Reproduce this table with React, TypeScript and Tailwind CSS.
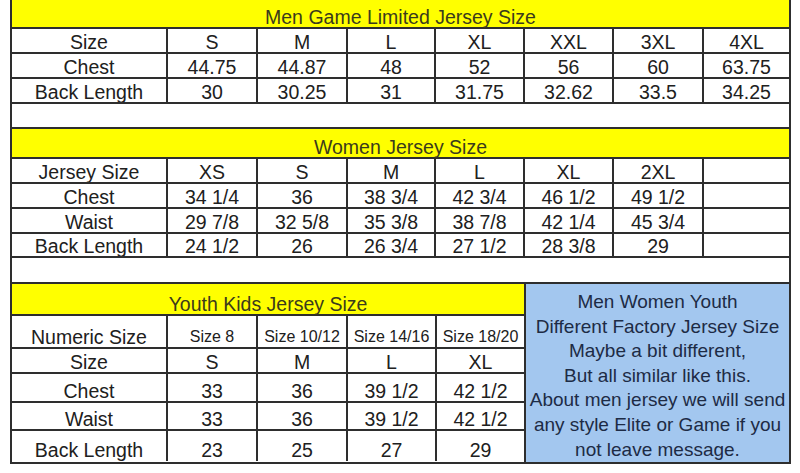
import React from "react";

const B = "border-[#2e2e2e]";
const MEN_COLS = "grid-cols-[154px_90px_90px_88px_89px_89px_90px_87px]";
const YOUTH_COLS = "grid-cols-[154px_90px_90px_89px_89px]";

function Row({
  cells,
  cols,
  h,
  small,
}: {
  cells: string[];
  cols: string;
  h: string;
  small?: boolean[];
}) {
  return (
    <div className={`grid ${cols} ${h} border-b-2 ${B}`}>
      {cells.map((c, i) => (
        <div
          key={i}
          className={`flex items-end justify-center overflow-hidden whitespace-nowrap bg-white ${
            i > 0 ? `border-l-2 ${B}` : ""
          } ${small && small[i] ? "text-[16px] leading-[18px] pb-[1px]" : "text-[19.5px] leading-[20px]"}`}
        >
          {c}
        </div>
      ))}
    </div>
  );
}

function Header({ text, h }: { text: string; h: string }) {
  return (
    <div
      className={`flex items-end justify-center bg-[#ffff00] ${h} border-b-2 ${B} text-[19.5px] leading-[20px] text-[#3b3b1c]`}
    >
      {text}
    </div>
  );
}

export default function App() {
  return (
    <div
      className="min-h-[473px] w-[800px] bg-white text-[#202020]"
      style={{ fontFamily: '"Liberation Sans", Arial, sans-serif' }}
    >
      <div className={`ml-[10px] flex w-[781px] flex-col border-x-2 ${B}`}>
        {/* Men */}
        <Header text="Men Game Limited Jersey Size" h="h-[29px]" />
        <Row cols={MEN_COLS} h="h-[25px]" cells={["Size", "S", "M", "L", "XL", "XXL", "3XL", "4XL"]} />
        <Row
          cols={MEN_COLS}
          h="h-[25px]"
          cells={["Chest", "44.75", "44.87", "48", "52", "56", "60", "63.75"]}
        />
        <Row
          cols={MEN_COLS}
          h="h-[25px]"
          cells={["Back Length", "30", "30.25", "31", "31.75", "32.62", "33.5", "34.25"]}
        />
        <div className={`h-[25px] border-b-2 ${B} bg-white`} />

        {/* Women */}
        <Header text="Women Jersey Size" h="h-[30px]" />
        <Row
          cols={MEN_COLS}
          h="h-[25px]"
          cells={["Jersey Size", "XS", "S", "M", "L", "XL", "2XL", ""]}
        />
        <Row
          cols={MEN_COLS}
          h="h-[25px]"
          cells={["Chest", "34 1/4", "36", "38 3/4", "42 3/4", "46 1/2", "49 1/2", ""]}
        />
        <Row
          cols={MEN_COLS}
          h="h-[25px]"
          cells={["Waist", "29 7/8", "32 5/8", "35 3/8", "38 7/8", "42 1/4", "45 3/4", ""]}
        />
        <Row
          cols={MEN_COLS}
          h="h-[24px]"
          cells={["Back Length", "24 1/2", "26", "26 3/4", "27 1/2", "28 3/8", "29", ""]}
        />
        <div className={`h-[26px] border-b-2 ${B} bg-white`} />

        {/* Youth + note */}
        <div className={`flex border-b-2 ${B}`}>
          <div className="flex w-[512px] flex-col">
            <Header text="Youth Kids Jersey Size" h="h-[32px]" />
            <Row
              cols={YOUTH_COLS}
              h="h-[33px]"
              cells={["Numeric Size", "Size 8", "Size 10/12", "Size 14/16", "Size 18/20"]}
              small={[false, true, true, true, true]}
            />
            <Row cols={YOUTH_COLS} h="h-[25px]" cells={["Size", "S", "M", "L", "XL"]} />
            <Row cols={YOUTH_COLS} h="h-[29px]" cells={["Chest", "33", "36", "39 1/2", "42 1/2"]} />
            <Row cols={YOUTH_COLS} h="h-[28px]" cells={["Waist", "33", "36", "39 1/2", "42 1/2"]} />
            <div className={`grid ${YOUTH_COLS} h-[30px]`}>
              {["Back Length", "23", "25", "27", "29"].map((c, i) => (
                <div
                  key={i}
                  className={`flex items-end justify-center bg-white text-[19.5px] leading-[20px] pb-[1px] ${
                    i > 0 ? `border-l-2 ${B}` : ""
                  }`}
                >
                  {c}
                </div>
              ))}
            </div>
          </div>
          <div
            className={`flex w-[265px] flex-col items-center border-l-2 ${B} bg-[#a3c7ef] pt-[6px] text-center text-[19px] leading-[24.6px] text-[#1d2b45]`}
          >
            <div>Men Women Youth</div>
            <div>Different Factory Jersey Size</div>
            <div>Maybe a bit different,</div>
            <div>But all similar like this.</div>
            <div>About men jersey we will send</div>
            <div>any style Elite or Game if you</div>
            <div>not leave message.</div>
          </div>
        </div>
      </div>
    </div>
  );
}
